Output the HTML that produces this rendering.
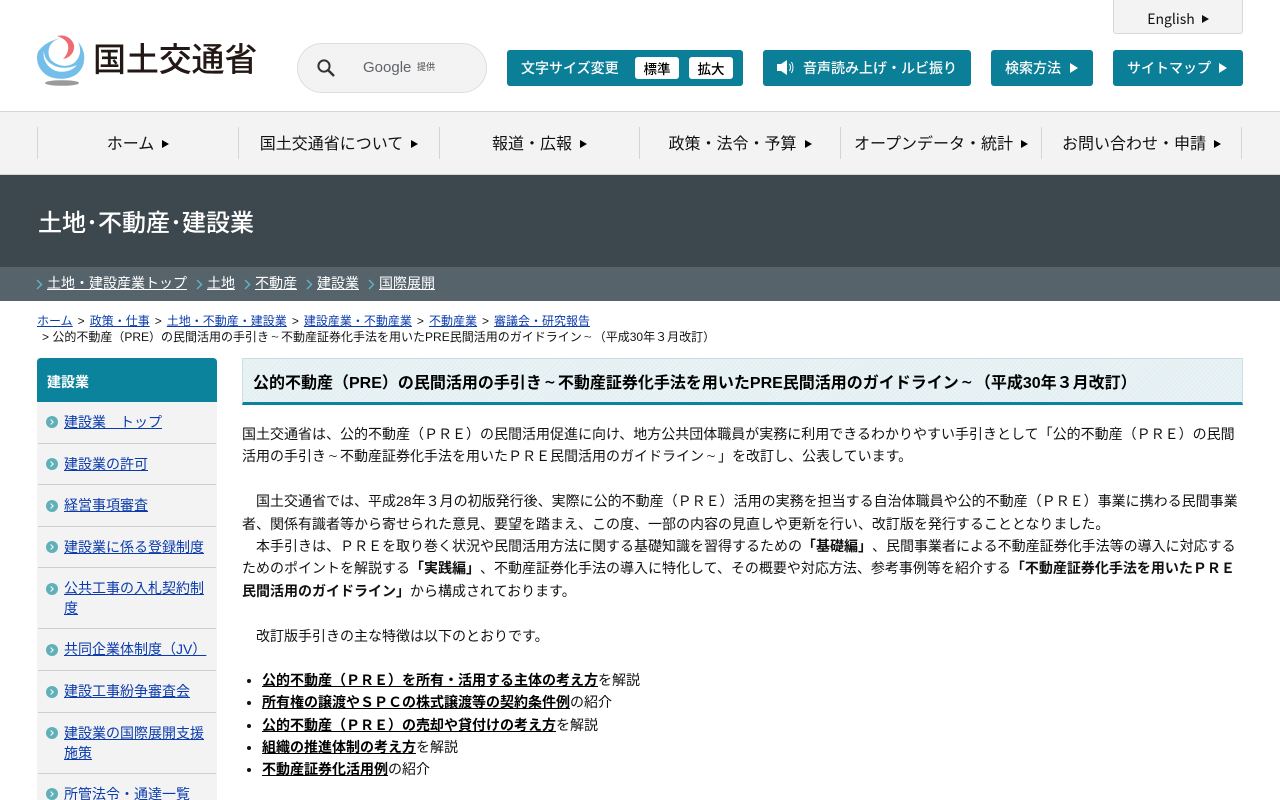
<!DOCTYPE html>
<html lang="ja"><head><meta charset="utf-8"><title>公的不動産（PRE）の民間活用の手引き</title>
<style>
*{box-sizing:border-box}
html,body{margin:0;padding:0;width:1280px;height:800px;overflow:hidden;background:#fff}
body{font-family:"Liberation Sans","Noto Sans CJK JP",sans-serif;font-size:14px;color:#000;position:relative;text-spacing-trim:space-all}
.a{position:absolute;white-space:nowrap}
a{color:#0b3cad;text-decoration:underline}
.sep{padding:0 1.700px}
.t{font-family:"NanumGothic",sans-serif;display:inline-block;width:1em;text-align:center;line-height:1}
.noto{font-family:"Noto Sans CJK JP",sans-serif}
.btn{position:absolute;top:50px;height:36px;background:#0b7f97;border-radius:3px;color:#fff;font-size:14px;line-height:37px;white-space:nowrap;font-weight:500;font-family:"Noto Sans CJK JP",sans-serif}
.tri{display:inline-block;width:0;height:0;border-style:solid;border-color:transparent transparent transparent currentColor}
.nav{position:absolute;top:127px;height:32px;width:1px;background:#d4d4d4}
.navt{position:absolute;top:129px;height:32px;line-height:32px;font-size:16px;color:#111;text-align:center;white-space:nowrap}
.navt .tri{border-width:4.500px 0 4.500px 7px;margin-left:8px;color:#000;vertical-align:1px}
.sub{position:absolute;top:267px;left:0;width:1280px;height:34px;background:#56636b}
.sub a{position:absolute;top:6px;color:#fff;line-height:20px;white-space:nowrap}
.sub svg{position:absolute;top:12px}
.side{position:absolute;left:38px;width:178px;border-bottom:1px solid #cfcfcf}
.side a{position:absolute;left:26px;top:10px;width:146px;line-height:20px}
.dot{position:absolute;left:8px;width:12px;height:12px;border-radius:50%;background:#5fb0b9}
.dot:after{content:"";position:absolute;left:3px;top:4px;width:3px;height:3px;border-top:1px solid #fff;border-right:1px solid #fff;transform:rotate(45deg)}
#main{position:absolute;left:242px;top:423px;width:1001px;line-height:22.400px;color:#111}
#list{position:absolute;left:262px;top:669px;line-height:22.300px;white-space:nowrap;color:#111}
#list b{color:#000;text-decoration:underline}
.bul{position:absolute;left:247px;width:4px;height:4px;border-radius:50%;background:#111}
</style></head><body>

<svg class="a" style="left:36px;top:33px" width="50" height="54" viewBox="0 0 50 54">
<path d="M25 5 C17 7 8 10 2 19 C-1 28 3 38 12 43 C21 47 33 47 41 41 C47 36 49 29 48 21 C47 16 45 12 42 9 C46 17 44 25 38 30 C31 35 21 33 15 27 C11 22 12 13 17 9 C19 7 22 6 25 5Z" fill="#74bfea"/>
<path d="M8 18 C6 27 12 35 20 38 C28 40 36 38 41 32 C35 35 26 36 19 33 C12 30 8 25 8 18Z" fill="#fff"/>
<path d="M14 15 C12 22 16 29 23 31 C30 33 37 30 41 24 C35 28 27 29 21 26 C16 23 14 20 14 15Z" fill="#fff"/>
<path d="M21 3 C29 1 36 5 38 12 C39 19 34 25 27 26 C31 22 33 17 32 12 C31 8 27 5 21 3Z" fill="#ee6b73"/>
<ellipse cx="26" cy="50" rx="17" ry="2.800" fill="#9a9a9a"/>
</svg>
<div class="a noto" style="left:93px;top:37px;font-size:33px;line-height:40px;font-weight:500;color:#231815;letter-spacing:-.15px">国土交通省</div>

<div class="a" style="left:297px;top:43px;width:190px;height:50px;border:1px solid #ddd;border-radius:25px;background:#f3f3f3"></div>
<svg class="a" style="left:316px;top:58px" width="20" height="20" viewBox="0 0 20 20"><circle cx="8" cy="8" r="5.600" fill="none" stroke="#333" stroke-width="2"/><path d="M12 12 L18 18" stroke="#333" stroke-width="2.400"/></svg>
<div class="a" style="left:363px;top:58px;font-size:15px;line-height:20px;color:#5f6368">Google</div>
<div class="a noto" style="left:417px;top:60px;font-size:9px;line-height:14px;color:#666;font-weight:500">提供</div>

<div class="a noto" style="left:1113px;top:-2px;width:130px;height:36px;background:#f3f3f3;border:1px solid #d8d8d8;border-radius:0 0 3px 3px;text-align:center;line-height:40px;font-size:14px;color:#111">English<span class="tri" style="border-width:4.500px 0 4.500px 7px;margin-left:7px;vertical-align:1px"></span></div>

<div class="btn" style="left:507px;width:236px"><span style="position:absolute;left:14px">文字サイズ変更</span></div>
<div class="a noto" style="left:635px;top:57px;width:44px;height:22px;background:#fff;border-radius:3px;text-align:center;line-height:22px;color:#000;font-size:13.500px;font-weight:500">標準</div>
<div class="a noto" style="left:689px;top:57px;width:44px;height:22px;background:#fff;border-radius:3px;text-align:center;line-height:22px;color:#000;font-size:13.500px;font-weight:500">拡大</div>
<div class="btn" style="left:763px;width:208px"><span style="position:absolute;left:40px">音声読み上げ・ルビ振り</span>
<svg style="position:absolute;left:13px;top:9px" width="20" height="17" viewBox="0 0 20 17"><path d="M1 5h4l6-4v15l-6-4H1z" fill="#fff"/><path d="M13.500 5q2 3.500 0 7M15.500 3q3 5.500 0 11" fill="none" stroke="#fff" stroke-width="1"/></svg></div>
<div class="btn" style="left:991px;width:102px"><span style="position:absolute;left:14px">検索方法</span><span class="tri" style="position:absolute;left:79px;top:13px;border-width:5px 0 5px 8px"></span></div>
<div class="btn" style="left:1113px;width:130px"><span style="position:absolute;left:14px">サイトマップ</span><span class="tri" style="position:absolute;left:106px;top:13px;border-width:5px 0 5px 8px"></span></div>

<div class="a" style="left:0;top:111px;width:1280px;height:64px;background:#f3f3f3;border-top:1px solid #d6d6d6;border-bottom:1px solid #d6d6d6"></div>
<i class="nav" style="left:37px"></i><i class="nav" style="left:238px"></i><i class="nav" style="left:439px"></i><i class="nav" style="left:639px"></i><i class="nav" style="left:840px"></i><i class="nav" style="left:1041px"></i><i class="nav" style="left:1241px"></i>
<div class="navt" style="left:38px;width:200px">ホーム<span class="tri"></span></div>
<div class="navt" style="left:239px;width:200px">国土交通省について<span class="tri"></span></div>
<div class="navt" style="left:440px;width:199px">報道・広報<span class="tri"></span></div>
<div class="navt" style="left:640px;width:200px">政策・法令・予算<span class="tri"></span></div>
<div class="navt" style="left:841px;width:200px">オープンデータ・統計<span class="tri"></span></div>
<div class="navt" style="left:1042px;width:199px">お問い合わせ・申請<span class="tri"></span></div>

<div class="a" style="left:0;top:175px;width:1280px;height:92px;background:#3c484e"></div>
<div class="a noto" style="left:38px;top:203px;font-size:24px;line-height:36px;color:#fff;font-weight:500">土地･不動産･建設業</div>

<div class="sub">
<svg style="left:36px" width="7" height="11" viewBox="0 0 7 11"><path d="M1 1l4.500 4.500L1 10" fill="none" stroke="#5fb7c4" stroke-width="1.400"/></svg><a style="left:47px">土地・建設産業トップ</a>
<svg style="left:196px" width="7" height="11" viewBox="0 0 7 11"><path d="M1 1l4.500 4.500L1 10" fill="none" stroke="#5fb7c4" stroke-width="1.400"/></svg><a style="left:207px">土地</a>
<svg style="left:244px" width="7" height="11" viewBox="0 0 7 11"><path d="M1 1l4.500 4.500L1 10" fill="none" stroke="#5fb7c4" stroke-width="1.400"/></svg><a style="left:255px">不動産</a>
<svg style="left:306px" width="7" height="11" viewBox="0 0 7 11"><path d="M1 1l4.500 4.500L1 10" fill="none" stroke="#5fb7c4" stroke-width="1.400"/></svg><a style="left:317px">建設業</a>
<svg style="left:368px" width="7" height="11" viewBox="0 0 7 11"><path d="M1 1l4.500 4.500L1 10" fill="none" stroke="#5fb7c4" stroke-width="1.400"/></svg><a style="left:379px">国際展開</a>
</div>

<div class="a" style="left:37px;top:313px;font-size:12px;line-height:16px;color:#111"><a>ホーム</a><span class="sep"> &gt; </span><a>政策・仕事</a><span class="sep"> &gt; </span><a>土地・不動産・建設業</a><span class="sep"> &gt; </span><a>建設産業・不動産業</a><span class="sep"> &gt; </span><a>不動産業</a><span class="sep"> &gt; </span><a>審議会・研究報告</a></div>
<div class="a" style="left:42px;top:329px;font-size:12px;line-height:16px;color:#111">&gt; 公的不動産（PRE）の民間活用の手引き<span class="t">～</span>不動産証券化手法を用いたPRE民間活用のガイドライン<span class="t">～</span>（平成30年３月改訂）</div>

<div class="a" style="left:37px;top:358px;width:180px;height:442px;background:#f3f3f3"></div>
<div class="a" style="left:37px;top:358px;width:180px;height:44px;background:#0b839c;border-radius:4px 4px 0 0;color:#fff;font-size:14px;line-height:48px;padding-left:10px;font-weight:700">建設業</div>
<div class="side" style="top:402px;height:42px"><i class="dot" style="top:14px"></i><a>建設業　トップ</a></div>
<div class="side" style="top:444px;height:41px"><i class="dot" style="top:14px"></i><a>建設業の許可</a></div>
<div class="side" style="top:485px;height:42px"><i class="dot" style="top:15px"></i><a>経営事項審査</a></div>
<div class="side" style="top:527px;height:41px"><i class="dot" style="top:14px"></i><a>建設業に係る登録制度</a></div>
<div class="side" style="top:568px;height:61px"><i class="dot" style="top:15px"></i><a>公共工事の入札契約制度</a></div>
<div class="side" style="top:629px;height:42px"><i class="dot" style="top:15px"></i><a>共同企業体制度（JV）</a></div>
<div class="side" style="top:671px;height:42px"><i class="dot" style="top:15px"></i><a>建設工事紛争審査会</a></div>
<div class="side" style="top:713px;height:61px"><i class="dot" style="top:14px"></i><a>建設業の国際展開支援施策</a></div>
<div class="side" style="top:774px;height:40px;border:0"><i class="dot" style="top:14px"></i><a>所管法令・通達一覧</a></div>

<div class="a" style="left:242px;top:358px;width:1001px;height:47px;border:1px solid #c9dfe4;border-bottom:3px solid #0b839c;background:repeating-linear-gradient(135deg,#e9f3f5 0,#e9f3f5 2px,#dfedf0 2px,#dfedf0 3px)"></div>
<div class="a" style="left:253px;top:372px;font-size:16px;line-height:24px;font-weight:700;color:#000">公的不動産（PRE）の民間活用の手引き<span class="t">～</span>不動産証券化手法を用いたPRE民間活用のガイドライン<span class="t">～</span>（平成30年３月改訂）</div>

<div id="main">国土交通省は、公的不動産（ＰＲＥ）の民間活用促進に向け、地方公共団体職員が実務に利用できるわかりやすい手引きとして「公的不動産（ＰＲＥ）の民間活用の手引き<span class="t">～</span>不動産証券化手法を用いたＰＲＥ民間活用のガイドライン<span class="t">～</span>」を改訂し、公表しています。<br><br>　国土交通省では、平成28年３月の初版発行後、実際に公的不動産（ＰＲＥ）活用の実務を担当する自治体職員や公的不動産（ＰＲＥ）事業に携わる民間事業者、関係有識者等から寄せられた意見、要望を踏まえ、この度、一部の内容の見直しや更新を行い、改訂版を発行することとなりました。<br>　本手引きは、ＰＲＥを取り巻く状況や民間活用方法に関する基礎知識を習得するための<b>「基礎編」</b>、民間事業者による不動産証券化手法等の導入に対応するためのポイントを解説する<b>「実践編」</b>、不動産証券化手法の導入に特化して、その概要や対応方法、参考事例等を紹介する<b>「不動産証券化手法を用いたＰＲＥ民間活用のガイドライン」</b>から構成されております。<br><br>　改訂版手引きの主な特徴は以下のとおりです。</div>

<i class="bul" style="top:679px"></i><i class="bul" style="top:701px"></i><i class="bul" style="top:724px"></i><i class="bul" style="top:746px"></i><i class="bul" style="top:768px"></i>
<div id="list"><b>公的不動産（ＰＲＥ）を所有・活用する主体の考え方</b>を解説<br><b>所有権の譲渡やＳＰＣの株式譲渡等の契約条件例</b>の紹介<br><b>公的不動産（ＰＲＥ）の売却や貸付けの考え方</b>を解説<br><b>組織の推進体制の考え方</b>を解説<br><b>不動産証券化活用例</b>の紹介</div>
</body></html>
